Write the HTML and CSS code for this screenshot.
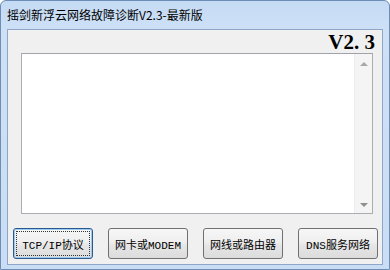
FILE: index.html
```html
<!DOCTYPE html>
<html lang="zh-CN">
<head>
    <meta charset="UTF-8">
    <title>摇剑新浮云网络故障诊断V2.3-最新版</title>
    <link rel="stylesheet" href="styles.css">
</head>
<body>
    <div class="window">
        <!-- Title bar -->
        <div class="titlebar">摇剑新浮云网络故障诊断V2.3-最新版</div>
        <!-- Client area -->
        <div class="client">
            <div class="version">V2. 3</div>
            <div class="log">
                <div class="log-body"></div>
                <div class="scrollbar">
                    <span class="arrow up"></span>
                    <span class="arrow down"></span>
                </div>
            </div>
            <div class="buttons">
                <button class="btn default"><span class="focus">TCP/IP协议</span></button>
                <button class="btn">网卡或MODEM</button>
                <button class="btn">网线或路由器</button>
                <button class="btn">DNS服务网络</button>
            </div>
        </div>
    </div>
</body>
</html>
```

FILE: styles.css
```css
body {
    margin: 0;
    background: #ffffff;
    font-family: "Noto Sans CJK SC", sans-serif;
}

.window {
    width: 390px;
    height: 270px;
    box-sizing: border-box;
    padding: 0 6px 4px 6px;
    background: linear-gradient(to bottom, #c5dbf4 0%, #cde0f6 30px, #c9ddf4 100%);
    border: 1px solid #6d8db5;
    border-radius: 6px 6px 0 0;
    display: flex;
    flex-direction: column;
}

.titlebar {
    height: 28px;
    line-height: 28px;
    font-size: 12px;
    color: #000;
}

.client {
    flex: 1;
    background: #f0f0f0;
    border: 1px solid #8ea7c6;
    display: flex;
    flex-direction: column;
}

.version {
    height: 23px;
    text-align: right;
    padding-right: 7px;
    font-family: "Liberation Serif", serif;
    font-weight: bold;
    font-size: 21px;
    line-height: 24px;
    color: #000;
    white-space: pre;
}

.log {
    margin: 0 9px 0 13px;
    height: 161px;
    box-sizing: border-box;
    border: 1px solid #abadb3;
    border-top-color: #a0a3aa;
    background: #fff;
    display: flex;
}

.log-body {
    flex: 1;
}

.scrollbar {
    width: 17px;
    background: #f4f4f4;
    border-left: 1px solid #ececec;
    display: flex;
    flex-direction: column;
    justify-content: space-between;
    align-items: center;
    padding: 8px 0 6px 0;
}

.arrow {
    width: 0;
    height: 0;
    border-left: 4px solid transparent;
    border-right: 4px solid transparent;
}

.arrow.up {
    border-bottom: 4px solid #a8a8a8;
}

.arrow.down {
    border-top: 4px solid #8e8e8e;
}

.buttons {
    display: flex;
    gap: 15px;
    padding: 14px 0 0 5px;
}

.btn {
    width: 80px;
    height: 31px;
    padding: 0;
    border: 1px solid #707070;
    border-radius: 3px;
    background: linear-gradient(to bottom, #f6f6f6 0%, #efefef 45%, #e6e6e6 55%, #dcdcdc 100%);
    font-family: "Liberation Mono", "Noto Sans CJK SC", monospace;
    font-size: 11px;
    color: #000;
    display: flex;
    align-items: center;
    justify-content: center;
}

.btn.default {
    border-color: #2c5a8f;
    box-shadow: inset 0 0 0 1px #9ccaf0;
    padding: 2px;
}

.btn .focus {
    flex: 1;
    align-self: stretch;
    display: flex;
    align-items: center;
    justify-content: center;
    border: 1px dotted #333;
}
```
